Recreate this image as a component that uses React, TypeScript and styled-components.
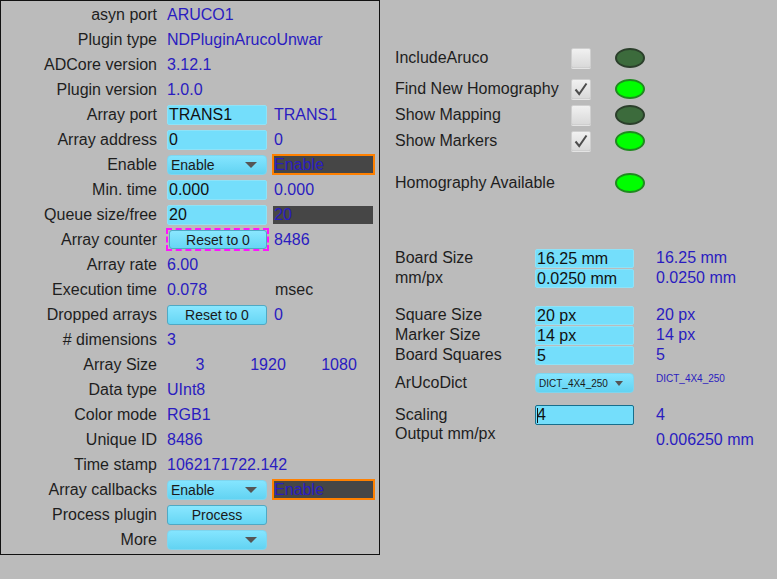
import React from 'react';
import styled, { createGlobalStyle, css } from 'styled-components';

const GlobalStyle = createGlobalStyle`
  html, body {
    margin: 0;
    padding: 0;
    background: #bbbbbb;
  }
  body {
    width: 777px;
    height: 579px;
    overflow: hidden;
    font-family: "Liberation Sans", Arial, sans-serif;
    color: #1e1e1e;
  }
`;

const Screen = styled.div`
  display: flex;
  align-items: flex-start;
`;

/* ---------- left panel ---------- */

const Panel = styled.div`
  width: 378px;
  border: 1px solid #111;
  display: grid;
  grid-template-columns: 161px 100px 103px;
  column-gap: 5px;
  grid-auto-rows: 25px;
  padding: 1px 0 2px;
`;

const Label = styled.div`
  font-size: 16px;
  line-height: 25px;
  text-align: right;
  padding-right: 5px;
  white-space: nowrap;
  color: #1e1e1e;
`;

const Value = styled.div<{ $pad?: number; $small?: boolean }>`
  font-size: ${(p) => (p.$small ? '10px' : '16px')};
  line-height: 25px;
  color: #2a1cc0;
  white-space: nowrap;
  padding-left: ${(p) => p.$pad ?? 0}px;
`;

const Plain = styled.div`
  font-size: 16px;
  line-height: 25px;
  color: #1e1e1e;
  padding-left: 3px;
`;

const Empty = styled.div``;

const Field = styled.div<{ $h?: number; $focus?: boolean }>`
  align-self: center;
  height: ${(p) => p.$h ?? 20}px;
  box-sizing: border-box;
  background: #74defb;
  border-radius: 2px;
  border: 1px solid ${(p) => (p.$focus ? '#176e8c' : '#8fe2f7')};
  font-size: 16px;
  line-height: ${(p) => (p.$h ?? 20) - 2}px;
  padding-left: 1px;
  color: #111;
  white-space: nowrap;
  overflow: hidden;
  display: flex;
  align-items: center;
`;

const Caret = styled.span`
  display: inline-block;
  width: 1px;
  height: 15px;
  background: #111;
  margin-right: -1px;
`;

const Combo = styled.div<{ $small?: boolean }>`
  align-self: center;
  height: 20px;
  box-sizing: border-box;
  border-radius: 4px;
  background: linear-gradient(#84e5ff, #62d3f2);
  border: 1px solid #7fd5ee;
  display: flex;
  align-items: center;
  padding: 0 ${(p) => (p.$small ? 10 : 9)}px 0 3px;
  font-size: ${(p) => (p.$small ? '10px' : '14px')};
  color: #1a1a1a;
  white-space: nowrap;
  &::after {
    content: '';
    margin-left: auto;
    border-left: ${(p) => (p.$small ? 4 : 6)}px solid transparent;
    border-right: ${(p) => (p.$small ? 4 : 6)}px solid transparent;
    border-top: ${(p) => (p.$small ? 5 : 6)}px solid #555;
  }
`;

const Readback = styled.div<{ $alarm?: boolean }>`
  align-self: center;
  box-sizing: border-box;
  background: #464646;
  color: #2a1cc0;
  font-size: 16px;
  white-space: nowrap;
  ${(p) =>
    p.$alarm
      ? css`
          height: 21px;
          width: 103px;
          border: 2px solid #ff8000;
          line-height: 18px;
          padding-left: 0;
        `
      : css`
          height: 18px;
          width: 100px;
          margin-left: 1px;
          line-height: 18px;
          padding-left: 1px;
        `}
`;

const Button = styled.button`
  align-self: center;
  height: 20px;
  width: 100%;
  box-sizing: border-box;
  border-radius: 3px;
  border: 1px solid #4fa9c4;
  background: linear-gradient(#8ae7ff, #66d6f4);
  font-family: "Liberation Sans", Arial, sans-serif;
  font-size: 14px;
  color: #1a1a1a;
  padding: 0;
  line-height: 18px;
`;

const FocusWrap = styled.div`
  align-self: center;
  height: 23px;
  box-sizing: border-box;
  border: 2px dashed #ff14ff;
  margin: 0 -2px 0 -1px;
  padding: 0 0 0 1px;
  display: flex;
  align-items: center;
  & > ${Button} {
    height: 19px;
    width: 98px;
  }
`;

const SizeRow = styled.div`
  grid-column: 2 / span 2;
  display: grid;
  grid-template-columns: 66px 70px 72px;
  & > ${Value} {
    text-align: center;
  }
`;

/* ---------- right side ---------- */

const Side = styled.div`
  margin-left: 15px;
  display: flex;
  flex-direction: column;
  padding-top: 47px;
`;

const StatusRow = styled.div<{ $top: number }>`
  margin-top: ${(p) => p.$top}px;
  height: 22px;
  display: grid;
  grid-template-columns: 176px 20px 24px 30px;
  align-items: center;
`;

const SideLabel = styled.div`
  font-size: 16px;
  color: #1e1e1e;
  white-space: nowrap;
`;

const Check = styled.div`
  width: 20px;
  height: 20px;
  box-sizing: border-box;
  border-radius: 2px;
  border: 1px solid #cfcfcf;
  background: linear-gradient(#f1f1f1, #d9d9d9);
  box-shadow: 0 1px 0 #e4e4e4;
  display: flex;
  align-items: center;
  justify-content: center;
`;

const Led = styled.div<{ $on?: boolean }>`
  grid-column: 4;
  width: 30px;
  height: 20px;
  box-sizing: border-box;
  border-radius: 50%;
  border: 2px solid ${(p) => (p.$on ? '#1f8a1f' : '#2b3f2b')};
  background: ${(p) => (p.$on ? '#00ff00' : '#3c6b3c')};
`;

const ParamRow = styled.div<{ $top: number; $h?: number }>`
  margin-top: ${(p) => p.$top}px;
  height: ${(p) => p.$h ?? 20}px;
  display: grid;
  grid-template-columns: 140px 99px auto;
  align-items: center;
  & > ${Value} {
    padding-left: 22px;
    line-height: 20px;
  }
`;

const TopLabel = styled(SideLabel)`
  align-self: start;
  line-height: 18px;
`;

const EndValue = styled(Value)`
  align-self: end;
`;

const TopValue = styled(Value)`
  align-self: start;
  line-height: 12px !important;
`;

const CheckMark = () => (
  <svg width="16" height="16" viewBox="0 0 16 16">
    <path d="M2.5 8.5 L6.2 13 L13.5 2.5" fill="none" stroke="#4d4d4d" strokeWidth="2" />
  </svg>
);

export default function App() {
  return (
    <>
      <GlobalStyle />
      <Screen>
        <Panel>
          <Label>asyn port</Label>
          <Value>ARUCO1</Value>
          <Empty />

          <Label>Plugin type</Label>
          <Value>NDPluginArucoUnwar</Value>
          <Empty />

          <Label>ADCore version</Label>
          <Value>3.12.1</Value>
          <Empty />

          <Label>Plugin version</Label>
          <Value>1.0.0</Value>
          <Empty />

          <Label>Array port</Label>
          <Field>TRANS1</Field>
          <Value $pad={2}>TRANS1</Value>

          <Label>Array address</Label>
          <Field>0</Field>
          <Value $pad={2}>0</Value>

          <Label>Enable</Label>
          <Combo>Enable</Combo>
          <Readback $alarm>Enable</Readback>

          <Label>Min. time</Label>
          <Field>0.000</Field>
          <Value $pad={2}>0.000</Value>

          <Label>Queue size/free</Label>
          <Field>20</Field>
          <Readback>20</Readback>

          <Label>Array counter</Label>
          <FocusWrap>
            <Button>Reset to 0</Button>
          </FocusWrap>
          <Value $pad={2}>8486</Value>

          <Label>Array rate</Label>
          <Value>6.00</Value>
          <Empty />

          <Label>Execution time</Label>
          <Value>0.078</Value>
          <Plain>msec</Plain>

          <Label>Dropped arrays</Label>
          <Button>Reset to 0</Button>
          <Value $pad={2}>0</Value>

          <Label># dimensions</Label>
          <Value>3</Value>
          <Empty />

          <Label>Array Size</Label>
          <SizeRow>
            <Value>3</Value>
            <Value>1920</Value>
            <Value>1080</Value>
          </SizeRow>

          <Label>Data type</Label>
          <Value>UInt8</Value>
          <Empty />

          <Label>Color mode</Label>
          <Value>RGB1</Value>
          <Empty />

          <Label>Unique ID</Label>
          <Value>8486</Value>
          <Empty />

          <Label>Time stamp</Label>
          <Value>1062171722.142</Value>
          <Empty />

          <Label>Array callbacks</Label>
          <Combo>Enable</Combo>
          <Readback $alarm>Enable</Readback>

          <Label>Process plugin</Label>
          <Button>Process</Button>
          <Empty />

          <Label>More</Label>
          <Combo />
          <Empty />
        </Panel>

        <Side>
          <StatusRow $top={0}>
            <SideLabel>IncludeAruco</SideLabel>
            <Check />
            <Led />
          </StatusRow>
          <StatusRow $top={9}>
            <SideLabel>Find New Homography</SideLabel>
            <Check>
              <CheckMark />
            </Check>
            <Led $on />
          </StatusRow>
          <StatusRow $top={4}>
            <SideLabel>Show Mapping</SideLabel>
            <Check />
            <Led />
          </StatusRow>
          <StatusRow $top={4}>
            <SideLabel>Show Markers</SideLabel>
            <Check>
              <CheckMark />
            </Check>
            <Led $on />
          </StatusRow>
          <StatusRow $top={20}>
            <SideLabel>Homography Available</SideLabel>
            <Led $on />
          </StatusRow>

          <ParamRow $top={54}>
            <SideLabel>Board Size</SideLabel>
            <Field $h={19}>16.25 mm</Field>
            <Value>16.25 mm</Value>
          </ParamRow>
          <ParamRow $top={0}>
            <SideLabel>mm/px</SideLabel>
            <Field $h={19}>0.0250 mm</Field>
            <Value>0.0250 mm</Value>
          </ParamRow>

          <ParamRow $top={17}>
            <SideLabel>Square Size</SideLabel>
            <Field $h={19}>20 px</Field>
            <Value>20 px</Value>
          </ParamRow>
          <ParamRow $top={0}>
            <SideLabel>Marker Size</SideLabel>
            <Field $h={19}>14 px</Field>
            <Value>14 px</Value>
          </ParamRow>
          <ParamRow $top={0}>
            <SideLabel>Board Squares</SideLabel>
            <Field $h={19}>5</Field>
            <Value>5</Value>
          </ParamRow>

          <ParamRow $top={8}>
            <SideLabel>ArUcoDict</SideLabel>
            <Combo $small>DICT_4X4_250</Combo>
            <TopValue $small>DICT_4X4_250</TopValue>
          </ParamRow>

          <ParamRow $top={12}>
            <SideLabel>Scaling</SideLabel>
            <Field $h={20} $focus>
              <Caret />4
            </Field>
            <Value>4</Value>
          </ParamRow>
          <ParamRow $top={0} $h={25}>
            <TopLabel>Output mm/px</TopLabel>
            <Empty />
            <EndValue>0.006250 mm</EndValue>
          </ParamRow>
        </Side>
      </Screen>
    </>
  );
}
